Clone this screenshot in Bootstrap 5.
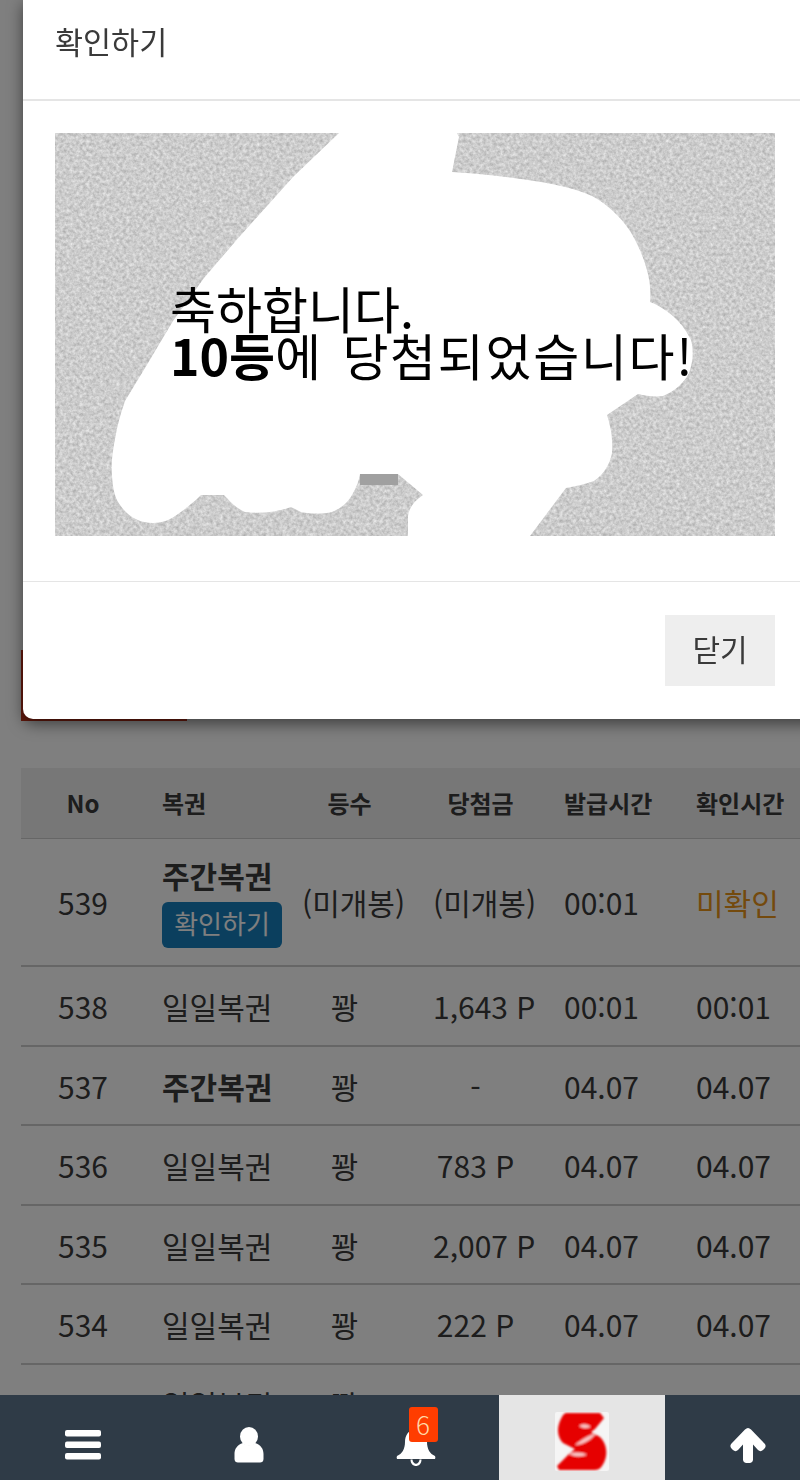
<!DOCTYPE html>
<html lang="ko">
<head>
<meta charset="utf-8">
<title>복권</title>
<link href="https://cdn.jsdelivr.net/npm/bootstrap@5.3.0/dist/css/bootstrap.min.css" rel="stylesheet">
<style>
html,body{height:1480px;overflow:hidden;background:#fff;}
body{font-family:"Noto Sans CJK KR","Noto Sans",sans-serif;color:#3a3a3a;position:relative;}
.pg-wrap{padding:650px 0 0 21px;width:800px;}
.red-tab{width:166px;height:71px;background:#c8321a;margin-bottom:47px;}
.lot-table{width:779px;table-layout:fixed;margin:0;border-collapse:collapse;--bs-table-bg:transparent;--bs-table-color:#3a3a3a;}
.lot-table th{background:#eee;height:70px;font-size:24px;font-weight:700;padding:0 15px;vertical-align:middle;border-bottom:1px solid #ccc;white-space:nowrap;}
.lot-table td{font-size:30px;font-weight:400;height:79.5px;padding:0 15px;vertical-align:middle;border-bottom:2px solid #ccc;white-space:nowrap;line-height:40px;}
.lot-table tr.tall td{height:128.4px;}
.lot-table th.ctr:first-child,.lot-table td.ctr:first-child{padding:0 16px 0 14px;}
.ctr{text-align:center;}
.trail{padding-right:16px;}
.trail-s{padding-right:6px;}
.lot-table td.wk,.wk{font-weight:700;}
.chk-btn{display:block;width:120px;height:46px;margin-top:7px;background:#167ebc;color:#fff;border:0;border-radius:6px;font-size:26px;line-height:38px;padding:0 0 4px;text-align:center;}
.unchk{color:#e8941a;}
.dim{position:fixed;inset:0;background:#000;opacity:.5;z-index:1050;}
.pop{position:absolute;left:23px;top:-1px;width:800px;height:720px;z-index:1055;border:0;border-radius:0 0 10px 10px;box-shadow:0 5px 15px rgba(0,0,0,.5);background:#fff;}
.pop-head{height:102px;padding:0 32px 15px;border-bottom:2px solid #e5e5e5;border-radius:0;font-size:30.5px;color:#3a3a3a;}
.pop-body{height:480px;padding:32px;}
.pop-body svg{display:block;width:720px;height:403px;}
.pop-foot{height:138px;padding:33px 48px 0 0;border-top:1px solid #e5e5e5;justify-content:flex-end;align-items:flex-start;border-radius:0;}
.close-btn{width:110px;height:71px;margin:0;padding:0 0 4px;border:0;border-radius:0;background:#eee;color:#3a3a3a;font-size:30px;}
.dock{position:fixed;left:0;right:0;top:1395px;height:85px;background:#2f3b47;z-index:1060;overflow:hidden;flex-wrap:nowrap;}
.dock-cell{flex:0 0 166.25px;height:85px;position:relative;}
.dock-logo{background:#e5e5e5;}
.pad-menu{padding-top:35px;}
.pad-user{padding-top:32px;}
.pad-up{padding-top:33px;}
.pad-logo{padding-top:17px;}
.bell-num{position:absolute;left:76px;top:12px;width:29px;height:35px;background:#ff3d00;color:#ffd9a8;border-radius:3px;font-size:26px;font-weight:300;line-height:34px;text-align:center;padding:0;}
</style>
</head>
<body>
<div class="pg-wrap">
  <div class="red-tab"></div>
  <table class="table lot-table">
    <colgroup><col style="width:126px"><col style="width:140px"><col style="width:131px"><col style="width:131px"><col style="width:132px"><col style="width:119px"></colgroup>
    <thead><tr>
      <th class="ctr">No</th><th>복권</th><th class="ctr"><span class="trail-s">등수</span></th><th class="ctr"><span class="trail-s">당첨금</span></th><th>발급시간</th><th>확인시간</th>
    </tr></thead>
    <tbody>
      <tr class="tall"><td class="ctr">539</td><td><div class="wk">주간복권</div><button class="btn chk-btn" type="button">확인하기</button></td><td class="ctr">(미개봉)</td><td class="ctr">(미개봉)</td><td>00:01</td><td class="unchk">미확인</td></tr>
      <tr><td class="ctr">538</td><td>일일복권</td><td class="ctr"><span class="trail">꽝</span></td><td class="ctr">1,643 P</td><td>00:01</td><td>00:01</td></tr>
      <tr><td class="ctr">537</td><td class="wk">주간복권</td><td class="ctr"><span class="trail">꽝</span></td><td class="ctr"><span class="trail">-</span></td><td>04.07</td><td>04.07</td></tr>
      <tr><td class="ctr">536</td><td>일일복권</td><td class="ctr"><span class="trail">꽝</span></td><td class="ctr"><span class="trail">783 P</span></td><td>04.07</td><td>04.07</td></tr>
      <tr><td class="ctr">535</td><td>일일복권</td><td class="ctr"><span class="trail">꽝</span></td><td class="ctr">2,007 P</td><td>04.07</td><td>04.07</td></tr>
      <tr><td class="ctr">534</td><td>일일복권</td><td class="ctr"><span class="trail">꽝</span></td><td class="ctr"><span class="trail">222 P</span></td><td>04.07</td><td>04.07</td></tr>
      <tr><td class="ctr">533</td><td>일일복권</td><td class="ctr"><span class="trail">꽝</span></td><td class="ctr"><span class="trail">185 P</span></td><td>04.07</td><td>04.07</td></tr>
    </tbody>
  </table>
</div>

<div class="dim"></div>

<div class="modal-content pop">
  <div class="modal-header pop-head">확인하기</div>
  <div class="modal-body pop-body">
    <svg viewBox="55 133 720 403" xmlns="http://www.w3.org/2000/svg">
      <defs>
        <filter id="grain" x="0" y="0" width="100%" height="100%" color-interpolation-filters="sRGB">
          <feTurbulence type="fractalNoise" baseFrequency="0.3" numOctaves="3" seed="7"/>
          <feColorMatrix type="matrix" values="0.3 0 0 0 0.65  0.3 0 0 0 0.65  0.3 0 0 0 0.65  0 0 0 0 1"/>
          <feGaussianBlur stdDeviation="0.5"/>
        </filter>
      </defs>
      <rect x="55" y="133" width="720" height="403" filter="url(#grain)"/>
      <rect x="360" y="474" width="38" height="11" fill="#a0a0a0"/>
      <path d="M339 133L293 177L240 236L204 278L173 321L148 363L125 401C120 415 117 427 115 439C112 455 111 466 112 476C113 490 115 498 120 505C128 517 140 523 153 523C163 523 172 519 178 514C188 507 195 501 201 495L224 495C231 503 238 509 245 512C262 514 277 512 291 507L301 512C312 514 322 514 332 512C342 508 348 502 352 495C356 488 359 481 360 474L398 474L423 495C414 501 409 508 408 516L408 536L530 536L566 488C576 486 586 484 594 481C604 474 610 464 612 453C613 440 611 427 607 415L638 394C646 396 655 397 663 396C675 391 684 383 689 373C693 362 694 351 691 340C686 330 680 322 673 316C666 310 658 305 650 302C651 292 650 283 648 274C644 258 638 244 630 231C620 216 607 204 592 196C576 189 559 185 541 182C512 177 482 174 452 172L459 137L457 133Z" fill="#fff"/>
      <g fill="#000" font-size="50" font-family="'Noto Sans CJK KR','Noto Sans',sans-serif" word-spacing="4">
        <text x="170" y="329">축하합니다.</text>
        <text x="170" y="376"><tspan font-weight="700">10등</tspan><tspan letter-spacing="1.700">에 당첨되었습니다!</tspan></text>
      </g>
    </svg>
  </div>
  <div class="modal-footer pop-foot"><button class="btn close-btn" type="button">닫기</button></div>
</div>

<nav class="d-flex dock">
  <div class="dock-cell d-flex justify-content-center pad-menu">
    <svg width="36" height="30" viewBox="0 0 36 30" fill="#fff"><rect x="0" y="0" width="36" height="6.500" rx="2"/><rect x="0" y="11.500" width="36" height="6.500" rx="2"/><rect x="0" y="23" width="36" height="6.500" rx="2"/></svg>
  </div>
  <div class="dock-cell d-flex justify-content-center pad-user">
    <svg width="30" height="36" viewBox="0 0 30 36" fill="#fff"><ellipse cx="15" cy="9.500" rx="9" ry="9.500"/><path d="M9 16C3 18 .5 22 .5 27V32C.5 34.500 2 35.500 4 35.500H26C28 35.500 29.500 34.500 29.500 32V27C29.500 22 27 18 21 16C17 19 13 19 9 16Z"/></svg>
  </div>
  <div class="dock-cell">
    <svg class="position-absolute" style="left:63px;top:33px" width="40" height="38" viewBox="0 0 40 38" fill="#fff"><path d="M20 0C12 2 9 8 9 14C9 21 6 26 1 28C.5 29 .5 30 1 31H39C39.500 30 39.500 29 39 28C34 26 31 21 31 14C31 8 28 2 20 0Z"/><path d="M14.500 31.500C14.500 36 17.500 38 20 38C22.500 38 25.500 36 25.500 31.500H23.500C23.500 34 21.500 35.800 20 35.800C18.500 35.800 16.500 34 16.500 31.500Z"/></svg>
    <span class="bell-num">6</span>
  </div>
  <div class="dock-cell dock-logo d-flex justify-content-center pad-logo">
    <svg width="54" height="59" viewBox="0 0 54 59">
      <defs><filter id="soft" x="-10%" y="-10%" width="120%" height="120%"><feGaussianBlur stdDeviation="1"/></filter></defs>
      <rect width="54" height="59" rx="2" fill="#f5f5f5"/>
      <g filter="url(#soft)">
        <path d="M11 1H45L49 6L40 17L36 20L45 25C52 32 54 44 47 54C45 57 42 58 40 58H4L2 54L13 43L20 37L8 31C3 26 2 18 4 12C6 6 8 2 11 1Z" fill="#e60000"/>
        <path d="M20 33C27 27 35 23 41 21C37 27 29 33 20 33ZM14 42C21 40 27 40 32 43C26 45 19 45 14 42ZM24 14C28 11 33 12 36 15C31 17 27 16 24 14Z" fill="#f9c4c4"/>
      </g>
    </svg>
  </div>
  <div class="dock-cell d-flex justify-content-center pad-up">
    <svg width="36" height="35" viewBox="0 0 36 35" fill="#fff"><path d="M18 0C19 0 20 .5 21 1.500L34.500 15.500C36 17 36 19 34.500 20.500L33 22C31.500 23.500 29.500 23.500 28 22L23 16.500V31.500C23 33.500 21.500 35 19.500 35H16.500C14.500 35 13 33.500 13 31.500V16.500L8 22C6.500 23.500 4.500 23.500 3 22L1.500 20.500C0 19 0 17 1.500 15.500L15 1.500C16 .5 17 0 18 0Z"/></svg>
  </div>
</nav>
<script src="https://cdn.jsdelivr.net/npm/bootstrap@5.3.0/dist/js/bootstrap.bundle.min.js"></script>
</body>
</html>
